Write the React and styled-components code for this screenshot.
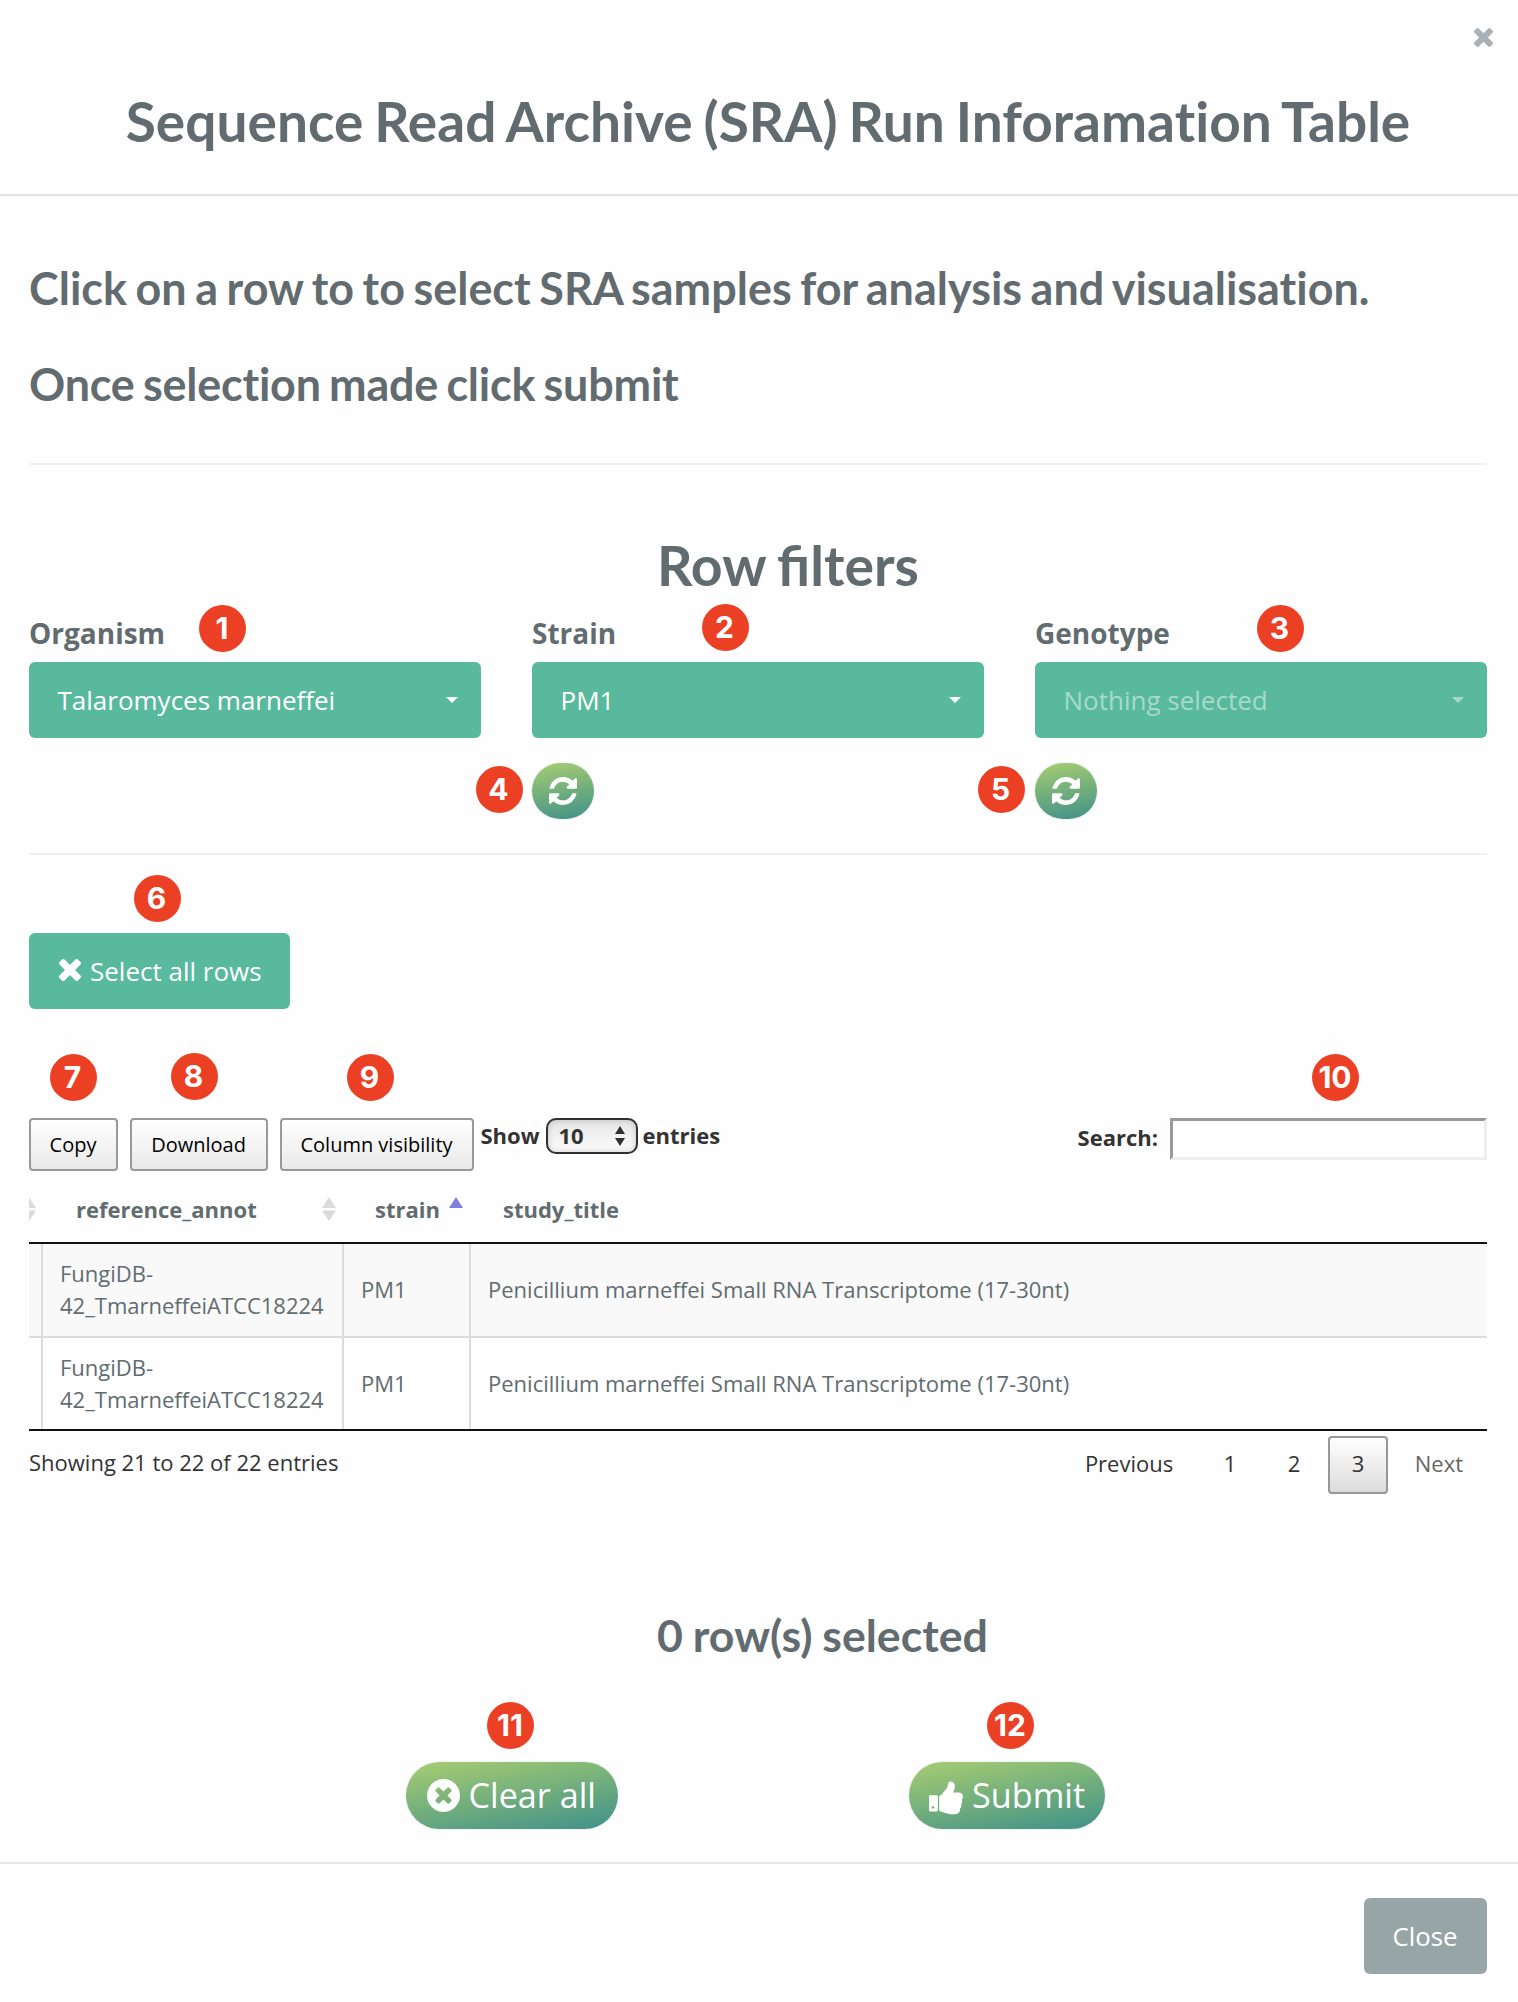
import React from "react";
import styled, { createGlobalStyle } from "styled-components";

const GlobalStyle = createGlobalStyle`
  *, *::before, *::after { box-sizing: border-box; }
  body {
    margin: 0;
    background: #fefefe;
    color: #626c70;
    font-family: "Open Sans", "Noto Sans", sans-serif;
    font-size: 22px;
  }
  button, input { font-family: inherit; margin: 0; }
`;

const Modal = styled.main`
  position: relative;
  width: 1518px;
  height: 2002px;
  overflow: hidden;
  background: #fefefe;
`;

const Header = styled.header`
  height: 196px;
  border-bottom: 2px solid #e4e4e4;
`;

const HeaderTools = styled.div`
  display: flex;
  align-items: center;
  justify-content: flex-end;
  height: 75px;
  padding-right: 25px;
`;

const CloseIcon = styled.button`
  display: flex;
  padding: 0;
  border: 0;
  background: none;
  color: #a9b1b6;
`;

const Title = styled.h2`
  margin: 0 0 0 18px;
  font: 700 55px/92px Lato, sans-serif;
  font-variant-ligatures: none;
  letter-spacing: 0.03px;
  word-spacing: -2.5px;
  text-align: center;
  white-space: nowrap;
`;

const Body = styled.div`
  padding: 62px 31px 33px 29px;
  border-bottom: 2px solid #e6e6e6;
`;

const Instruction = styled.h4`
  margin: 0 0 36px;
  font: 700 44.9px/60px Lato, sans-serif;
  letter-spacing: ${(p) => p.$tracking}px;
  word-spacing: -2.4px;
  white-space: nowrap;
`;

const Rule = styled.hr`
  height: 2px;
  margin: 0;
  border: 0;
  background: #ecf0f0;
`;

const IntroRule = styled(Rule)`
  margin-top: 49px;
`;

const FiltersTitle = styled.h2`
  margin: 70px 0 19px;
  padding-left: 60px;
  font: 700 55.4px/60px Lato, sans-serif;
  word-spacing: -2px;
  text-align: center;
`;

const Filters = styled.div`
  display: grid;
  grid-template-columns: repeat(3, 452px);
  column-gap: 51px;
  height: 239px;
`;

const Filter = styled.div`
  display: flex;
  flex-direction: column;
  align-items: flex-start;
`;

const Label = styled.label`
  margin-bottom: 10px;
  font-size: 28px;
  font-weight: 700;
  line-height: 38px;
`;

const Dropdown = styled.button`
  display: flex;
  align-items: center;
  justify-content: space-between;
  width: 100%;
  height: 76px;
  padding: 0 23px 0 28.5px;
  border: 0;
  border-radius: 6px;
  background: #58b99d;
  color: ${(p) => (p.$muted ? "#a8dacb" : "#fff")};
  font-size: 26px;
`;

const Caret = styled.span`
  border: 6px solid transparent;
  border-top-color: currentColor;
  border-bottom: 0;
`;

const Pill = styled.button`
  display: flex;
  align-items: center;
  border: 0;
  background: linear-gradient(170deg, #a6cc72 2%, #75b07c 48%, #429289 98%);
  box-shadow: 0 0 2px rgba(60, 80, 110, 0.22);
  color: #fff;
`;

const RefreshPill = styled(Pill)`
  justify-content: center;
  width: 62px;
  height: 56px;
  margin-top: 25px;
  padding: 0;
  border-radius: 28px;
`;

const ActionPill = styled(Pill)`
  gap: ${(p) => p.$gap}px;
  width: ${(p) => p.$width}px;
  height: 67px;
  padding: 0 0 0 20.5px;
  border-radius: 34px;
  font-size: 34.2px;
`;

const ActionLabel = styled.span`
  padding-bottom: 2px;
`;

const SelectAll = styled.button`
  display: flex;
  align-items: center;
  gap: 9px;
  width: 261px;
  height: 76px;
  margin: 78px 0 109px;
  padding: 0 0 0 30px;
  border: 0;
  border-radius: 6px;
  background: #58b99d;
  color: #fff;
  font-size: 26px;
`;

const IconLift = styled.span`
  display: flex;
  padding-bottom: 2px;
`;

const Toolbar = styled.div`
  display: flex;
  align-items: flex-start;
  height: 53px;
  color: #333;
  font-weight: 700;
  line-height: 34px;
`;

const ToolButton = styled.button`
  width: ${(p) => p.$width}px;
  height: 53px;
  margin-right: ${(p) => p.$after}px;
  padding: 0 1px 0 0;
  border: 2px solid #999;
  border-radius: 4px;
  background: linear-gradient(#fff, #e9e9e9);
  color: #000;
  font-size: 20px;
`;

const LengthSelect = styled.span`
  display: flex;
  align-items: center;
  justify-content: space-between;
  width: 92px;
  height: 36px;
  margin: 0 5px 0 6px;
  padding: 0 11px 0 11px;
  border: 2px solid #303030;
  border-radius: 10px;
  background: linear-gradient(#e6e6e6, #fcfcfc);
  box-shadow: inset 0 0 6px rgba(0, 0, 0, 0.2);
`;

const LengthValue = styled.span`
  padding-bottom: 2px;
  line-height: 30px;
`;

const SearchLabel = styled.label`
  display: flex;
  margin-left: auto;
  gap: 12px;
  line-height: 38px;
`;

const SearchInput = styled.input`
  width: 317px;
  height: 42px;
  padding: 0 6px;
  border: 3px solid;
  border-color: #999 #eee #eee #999;
  background: #fefefe;
  font-size: 22px;
`;

const TableRow = styled.div`
  display: grid;
  grid-template-columns: 14px 301px 127px 1016px;
  height: ${(p) => p.$height}px;
  border-bottom: 2px solid ${(p) => p.$rule};
  background: ${(p) => p.$fill || "transparent"};
  overflow: hidden;
`;

const HeadCell = styled.div`
  display: flex;
  align-items: center;
  justify-content: space-between;
  padding: 4px 8px 0 ${(p) => p.$indent}px;
  font-weight: 700;
`;

const ClippedSort = styled.div`
  display: flex;
  align-items: center;
  padding-top: 4px;
  margin-left: -7px;
`;

const Cell = styled.div`
  display: flex;
  align-items: center;
  padding: 0 0 ${(p) => p.$lift}px 17px;
  border-right: ${(p) => (p.$last ? 0 : 2)}px solid #dcdcdc;
  line-height: 32px;
`;

const EdgeCell = styled.div`
  border-right: 2px solid #dcdcdc;
`;

const TableFooter = styled.div`
  display: flex;
  align-items: flex-start;
  justify-content: space-between;
  padding-top: 5px;
  color: #333;
`;

const Info = styled.div`
  line-height: 52px;
`;

const Pager = styled.nav`
  display: flex;
  gap: 4px;
`;

const Page = styled.button`
  min-width: 60px;
  height: 58px;
  padding: 0 22px 5px 21px;
  border: 2px solid ${(p) => (p.$active ? "#979797" : "transparent")};
  border-radius: 4px;
  background: ${(p) => (p.$active ? "linear-gradient(#fff, #dcdcdc)" : "none")};
  color: ${(p) => (p.$muted ? "#666" : "#333")};
  font-size: 22px;
`;

const PageNumber = styled(Page)`
  width: 60px;
  padding: 0 0 5px 0.5px;
`;

const PreviousPage = styled(Page)`
  padding-right: 20.5px;
`;

const Selected = styled.h4`
  margin: 111px 0 97px;
  padding-left: 129px;
  font: 700 44.7px/60px Lato, sans-serif;
  word-spacing: -1px;
  text-align: center;
`;

const Actions = styled.div`
  display: flex;
  justify-content: space-between;
  padding: 0 382px 0 377px;
`;

const Footer = styled.footer`
  display: flex;
  justify-content: flex-end;
  padding: 34px 31px 28px;
`;

const CloseButton = styled.button`
  width: 123px;
  height: 76px;
  padding: 0 1px 1px 0;
  border: 0;
  border-radius: 6px;
  background: #98a5a6;
  color: #fff;
  font-size: 25.8px;
`;

const Marker = styled.span`
  position: absolute;
  left: ${(p) => p.$x - 23.5}px;
  top: ${(p) => p.$y - 23.5}px;
  display: flex;
  align-items: center;
  justify-content: center;
  width: 47px;
  height: 47px;
  padding-right: 1px;
  border-radius: 50%;
  background: #ec4025;
  color: #fff;
  font: 700 30px/47px Inter, "Liberation Sans", sans-serif;
`;

const TimesIcon = ({ size }) => (
  <svg width={size} height={size} viewBox="302 302 1188 1188" fill="currentColor">
    <path d="M1490 1322q0 40-28 68l-136 136q-28 28-68 28t-68-28l-294-294-294 294q-28 28-68 28t-68-28l-136-136q-28-28-28-68t28-68l294-294-294-294q-28-28-28-68t28-68l136-136q28-28 68-28t68 28l294 294 294-294q28-28 68-28t68 28l136 136q28 28 28 68t-28 68l-294 294 294 294q28 28 28 68z" transform="translate(0 -64)" />
  </svg>
);

const RefreshIcon = () => (
  <svg width="28" height="28" viewBox="0 128 1536 1536" fill="currentColor">
    <path d="M1511 1056q0 5-1 7-64 268-268 434.5t-478 166.5q-146 0-282.5-55t-243.5-157l-129 129q-19 19-45 19t-45-19-19-45v-448q0-26 19-45t45-19h448q26 0 45 19t19 45-19 45l-137 137q71 66 161 102t187 36q134 0 250-65t186-179q11-17 53-117 8-23 30-23h192q13 0 22.5 9.5t9.5 22.5zm25-800v448q0 26-19 45t-45 19h-448q-26 0-45-19t-19-45 19-45l138-138q-148-137-349-137-134 0-250 65t-186 179q-11 17-53 117-8 23-30 23h-199q-13 0-22.5-9.5t-9.5-22.5v-7q65-268 270-434.5t480-166.5q146 0 284 55.5t245 156.5l130-129q19-19 45-19t45 19 19 45z" />
  </svg>
);

const TimesCircleIcon = () => (
  <svg width="33" height="33" viewBox="128 128 1536 1536" fill="currentColor">
    <path d="M1277 1122q0-26-19-45l-181-181 181-181q19-19 19-45 0-27-19-46l-90-90q-19-19-46-19-26 0-45 19l-181 181-181-181q-19-19-45-19-27 0-46 19l-90 90q-19 19-19 46 0 26 19 45l181 181-181 181q-19 19-19 45 0 27 19 46l90 90q19 19 46 19 26 0 45-19l181-181 181 181q19 19 45 19 27 0 46-19l90-90q19-19 19-46zm387-226q0 209-103 385.5t-279.5 279.5-385.5 103-385.5-103-279.5-279.5-103-385.5 103-385.5 279.5-279.5 385.5-103 385.5 103 279.5 279.5 103 385.5z" />
  </svg>
);

const ThumbsUpIcon = () => (
  <svg width="34" height="34" viewBox="128 128 1536 1536" fill="currentColor" overflow="visible">
    <path d="M320 1344q0-26-19-45t-45-19q-27 0-45.5 19t-18.5 45q0 27 18.5 45.5t45.5 18.5q26 0 45-18.5t19-45.5zm160-512v640q0 26-19 45t-45 19h-288q-26 0-45-19t-19-45v-640q0-26 19-45t45-19h288q26 0 45 19t19 45zm1184 0q0 86-55 149 15 44 15 76 3 76-43 137 17 56 0 117-15 57-54 94 9 112-49 181-64 76-197 78h-129q-66 0-144-15.5t-121.5-29-120.5-39.5q-123-43-158-44-26-1-45-19.5t-19-44.5v-641q0-25 18-43.5t43-20.5q24-2 76-59t101-121q68-87 101-120 18-18 31-48t17.5-48.5 13.5-60.5q7-39 12.5-61t19.5-52 34-50q19-19 45-19 46 0 82.5 10.5t60 26 40 40.5 24 45 12 50 5 45 .5 39q0 38-9.5 76t-19 60-27.5 56q-3 6-10 18t-11 22-8 24h277q78 0 135 57t57 135z" transform="translate(66 121) scale(0.96)" />
  </svg>
);

const SortIcon = ({ ascending }) => (
  <svg width="14" height="24" viewBox="0 0 14 24">
    <path d="M7 0l7 11H0z" fill={ascending ? "#7f80da" : "#dbdbdb"} />
    {!ascending && <path d="M0 13.5h14L7 24z" fill="#dbdbdb" />}
  </svg>
);

const StepperIcon = () => (
  <svg width="10" height="20" viewBox="0 0 10 20" fill="#303030">
    <path d="M5 0l5 8H0zM0 12h10l-5 8z" />
  </svg>
);

const filters = [
  { label: "Organism", value: "Talaromyces marneffei" },
  { label: "Strain", value: "PM1", refresh: true },
  { label: "Genotype", value: "Nothing selected", refresh: true, muted: true },
];

const rows = [
  { height: 94, fill: "#f9f9f9", rule: "#dcdcdc", lift: 3 },
  { height: 93, rule: "#111", lift: 1 },
];

const markers = [
  [222.5, 628.5], [725, 627.5], [1280, 628.5], [499, 789.5], [1001, 789.5], [157, 898.5],
  [73, 1077], [194, 1076], [370, 1077], [1335.5, 1077], [510.5, 1725.5], [1010.5, 1725.5],
];

export default function App() {
  return (
    <>
      <GlobalStyle />
      <Modal>
        <Header>
          <HeaderTools>
            <CloseIcon aria-label="Close"><TimesIcon size={19} /></CloseIcon>
          </HeaderTools>
          <Title>Sequence Read Archive (SRA) Run Inforamation Table</Title>
        </Header>

        <Body>
          <Instruction $tracking={0.02}>Click on a row to to select SRA samples for analysis and visualisation.</Instruction>
          <Instruction $tracking={-0.2}>Once selection made click submit</Instruction>
          <IntroRule />

          <FiltersTitle>Row filters</FiltersTitle>
          <Filters>
            {filters.map((f) => (
              <Filter key={f.label}>
                <Label>{f.label}</Label>
                <Dropdown $muted={f.muted}>
                  <span>{f.value}</span>
                  <Caret />
                </Dropdown>
                {f.refresh && <RefreshPill aria-label="Refresh"><RefreshIcon /></RefreshPill>}
              </Filter>
            ))}
          </Filters>
          <Rule />

          <SelectAll>
            <IconLift><TimesIcon size={22} /></IconLift>
            Select all rows
          </SelectAll>

          <Toolbar>
            <ToolButton $width={89} $after={12}>Copy</ToolButton>
            <ToolButton $width={138} $after={12}>Download</ToolButton>
            <ToolButton $width={194} $after={6.5}>Column visibility</ToolButton>
            <span>Show</span>
            <LengthSelect><LengthValue>10</LengthValue><StepperIcon /></LengthSelect>
            <span>entries</span>
            <SearchLabel>Search:<SearchInput type="text" /></SearchLabel>
          </Toolbar>

          <TableRow $height={73} $rule="#111">
            <ClippedSort><SortIcon /></ClippedSort>
            <HeadCell $indent={33}>reference_annot<SortIcon /></HeadCell>
            <HeadCell $indent={31}>strain<SortIcon ascending /></HeadCell>
            <HeadCell $indent={32}>study_title</HeadCell>
          </TableRow>
          {rows.map((r, i) => (
            <TableRow key={i} $height={r.height} $fill={r.fill} $rule={r.rule}>
              <EdgeCell />
              <Cell $lift={r.lift}>FungiDB-<br />42_TmarneffeiATCC18224</Cell>
              <Cell $lift={r.lift}>PM1</Cell>
              <Cell $lift={r.lift} $last>Penicillium marneffei Small RNA Transcriptome (17-30nt)</Cell>
            </TableRow>
          ))}

          <TableFooter>
            <Info>Showing 21 to 22 of 22 entries</Info>
            <Pager>
              <PreviousPage>Previous</PreviousPage>
              <PageNumber>1</PageNumber>
              <PageNumber>2</PageNumber>
              <PageNumber $active>3</PageNumber>
              <Page $muted>Next</Page>
            </Pager>
          </TableFooter>

          <Selected>0 row(s) selected</Selected>
          <Actions>
            <ActionPill $width={211.5} $gap={9}><TimesCircleIcon /><ActionLabel>Clear all</ActionLabel></ActionPill>
            <ActionPill $width={196.5} $gap={9}><ThumbsUpIcon /><ActionLabel>Submit</ActionLabel></ActionPill>
          </Actions>
        </Body>

        <Footer>
          <CloseButton>Close</CloseButton>
        </Footer>

        {markers.map(([x, y], i) => (
          <Marker key={i} $x={x} $y={y}>{i + 1}</Marker>
        ))}
      </Modal>
    </>
  );
}
